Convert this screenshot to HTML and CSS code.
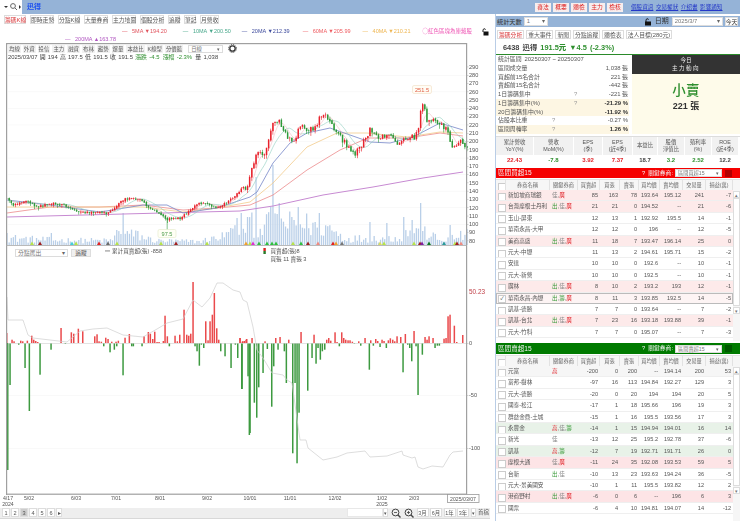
FILE: index.html
```html
<!DOCTYPE html>
<html lang="zh-Hant">
<head>
<meta charset="utf-8">
<title>迅得</title>
<link rel="stylesheet" href="styles.css">
</head>
<body>
<header class="top">
  <div class="searchbox">
    <svg width="22" height="14" viewBox="0 0 22 14"><path d="M4 6h4l-2 2z" fill="#333"/><circle cx="13" cy="6" r="2.4" fill="none" stroke="#666" stroke-width="1"/><path d="M15 8l2 2" stroke="#666"/><path d="M19 5l2 2-2 2z" fill="#333"/></svg>
  </div>
  <div class="stockname">迅得</div>
  <nav class="topbtns"><span>審法</span><span>概要</span><span>體檢</span><span>主力</span><span>檢核</span></nav>
  <nav class="toplinks"><a>個股資訊</a><a>交易權狀</a><a>介紹書</a><a>影響通知</a></nav>
</header>

<main class="main">
  <section class="left">
    <nav class="tabs lefttabs">
      <span class="on w1">籌碼K線</span><span class="w2">即時走勢</span><span class="w1">分點K線</span><span class="w2">大量券商</span><span class="w2">主力地圖</span><span class="w2">個股分析</span><span class="w3">追蹤</span><span class="w3">筆記</span><span class="w4">月營收</span>
    </nav>
    <div class="legend">
      <span class="lg c5">5MA <b>▼</b>194.20</span>
      <span class="lg c10">10MA <b>▼</b>200.50</span>
      <span class="lg c20">20MA <b>▼</b>212.39</span>
      <span class="lg c60">60MA <b>▼</b>205.99</span>
      <span class="lg c40">40MA <b>▼</b>210.21</span>
      <span class="hint">◯紅色區塊為庫藏股</span>
      <svg class="lock" width="8" height="8" viewBox="0 0 8 8"><path d="M2 4V2.2a1.4 1.4 0 0 1 2.6-.7" fill="none" stroke="#111"/><rect x="2.5" y="3.5" width="5" height="4" fill="#111"/></svg>
    </div>
    <div class="legend legend2"><span class="lg c200">200MA <b>▲</b>163.78</span></div>

    <div class="chartarea">
      <div id="chart"></div>
      <div class="toolbar">
        <span>均線</span><span>外資</span><span>投信</span><span>主力</span><span>融資</span><span>布林</span><span>趨勢</span><span>爆量</span><span>本益比</span><span>K線型</span><span>分價籃</span>
        <em class="sel daysel">日線</em>
        <svg class="gear" width="9" height="9" viewBox="0 0 9 9"><circle cx="4.5" cy="4.5" r="2.7" fill="none" stroke="#333" stroke-width="1.3"/><circle cx="4.5" cy="4.5" r="3.9" fill="none" stroke="#333" stroke-width="1" stroke-dasharray="1 1.04"/></svg>
      </div>
      <div class="quote">2025/03/07 開 194 高 197.5 低 191.5 收 191.5 <i class="g">漲跌 -4.5</i> <i class="g">漲幅 -2.3%</i> 量 1,038</div>
      <div class="lowctl"><em class="sel brokersel">分點選出</em><span class="btn">追蹤</span></div>
    </div>

    <footer class="pager">
      <div class="pages"><span>1</span><span>2</span><span class="cur">3</span><span>4</span><span>5</span><span>6</span><span class="more">▸</span></div>
      <div class="ranges">
        <em class="rangeinput"></em><em class="rangearrow">▾</em>
        <svg width="10" height="10" viewBox="0 0 10 10"><circle cx="4.5" cy="4.5" r="3.4" fill="none" stroke="#444"/><path d="M6.8 6.8L9.5 9.5" stroke="#444" stroke-width="1.4"/><path d="M3 4.5h3" stroke="#444" stroke-width=".8"/></svg>
        <svg width="10" height="10" viewBox="0 0 10 10"><circle cx="4.5" cy="4.5" r="3.4" fill="none" stroke="#444"/><path d="M6.8 6.8L9.5 9.5" stroke="#444" stroke-width="1.4"/><path d="M3 4.5h3M4.5 3v3" stroke="#444" stroke-width=".8"/></svg>
        <span>3月</span><span>6月</span><span>1年</span><span>3年</span><em class="rangearrow">▾</em><span class="first">首檔</span>
      </div>
    </footer>
  </section>

  <aside class="right">
    <div class="filter">
      <label>統計天數</label><em class="sel daysfield">1</em>
      <svg class="datelock" width="8" height="8" viewBox="0 0 8 8"><path d="M2 4V2.2a1.4 1.4 0 0 1 2.6-.7" fill="none" stroke="#111"/><rect x="1" y="3.5" width="6" height="4" fill="#111"/></svg>
      <label class="datelabel">日期</label><em class="sel datefield">2025/3/7</em><span class="today">今天</span>
    </div>
    <nav class="tabs righttabs">
      <span class="on">籌碼分析</span><span>重大事件</span><span>新聞</span><span>分點追蹤</span><span>體檢表</span><span>法人目標(280元)</span>
    </nav>
    <div class="headline">6438 迅得 <b class="g">191.5元</b> <b class="g">▼4.5 (-2.3%)</b></div>

    <div class="summary">
      <div class="stats">
        <div class="st"><span>統計區間</span><span class="range">20250307 ~ 20250307</span></div>
        <div class="st"><span>區間成交量</span><b>1,038 張</b></div>
        <div class="st"><span>買超前15名合計</span><b>221 張</b></div>
        <div class="st"><span>賣超前15名合計</span><b>-442 張</b></div>
        <div class="st"><span>1日籌碼集中</span><u class="q1">?</u><b>-221 張</b></div>
        <div class="st y"><span>1日籌碼集中(%)</span><u class="q1">?</u><b class="dk">-21.29 %</b></div>
        <div class="st y"><span>20日籌碼集中(%)</span><b class="dk">-11.92 %</b></div>
        <div class="st"><span>佔股本比重</span><u class="q2">?</u><b>-0.27 %</b></div>
        <div class="st y"><span>區間周轉率</span><u class="q2">?</u><b class="dk">1.26 %</b></div>
      </div>
      <div class="today-box">
        <div class="tb-head"><span>今日</span><span class="spaced">主力動向</span></div>
        <div class="tb-body"><strong>小賣</strong><span>221 張</span></div>
      </div>
    </div>

    <div class="fin">
      <div class="fc"><span>累計營收<br>YoY(%)</span><b class="r">22.43</b></div>
      <div class="fc"><span>營收<br>MoM(%)</span><b class="g">-7.8</b></div>
      <div class="fc"><span>EPS<br>(季)</span><b class="r">3.92</b></div>
      <div class="fc"><span>EPS<br>(近4季)</span><b class="r">7.37</b></div>
      <div class="fc"><span>本益比</span><b>18.7</b></div>
      <div class="fc"><span>股價<br>淨值比</span><b class="g">3.2</b></div>
      <div class="fc"><span>殖利率<br>(%)</span><b class="g">2.52</b></div>
      <div class="fc"><span>ROE<br>(近4季)</span><b>12.2</b></div>
    </div>

    <section class="rank">
      <div class="rankbar red"><h2>區間買超15</h2><u>?</u><span>關鍵券商:</span><em class="sel ranksel">區間買超15</em><i class="sq"></i></div>
      <div class="row head"><span class="cb"></span><span>券商名稱</span><span>關鍵券商</span><span>買賣超</span><span>買張</span><span>賣張</span><span>買均價</span><span>賣均價</span><span>交易量</span><span>損益(萬)</span></div>
      <div class="rankbody">
        <div class="rows">
          <div class="row pk"><span class="cb"></span><span>新加坡商瑞銀</span><span><i>佳</i>,<i class="r">廣</i></span><span>85</span><span>163</span><span>78</span><span>193.64</span><span>195.12</span><span>241</span><span>-7</span></div>
          <div class="row pk"><span class="cb"></span><span>台灣摩根士丹利</span><span><i class="g">出</i>,<i>佳</i>,<i class="r">廣</i></span><span>21</span><span>21</span><span>0</span><span>194.52</span><span>--</span><span>21</span><span>-6</span></div>
          <div class="row"><span class="cb"></span><span>玉山-屏東</span><span></span><span>12</span><span>13</span><span>1</span><span>192.92</span><span>195.5</span><span>14</span><span>-1</span></div>
          <div class="row"><span class="cb"></span><span>華南永昌-大甲</span><span></span><span>12</span><span>12</span><span>0</span><span>196</span><span>--</span><span>12</span><span>-5</span></div>
          <div class="row pk"><span class="cb"></span><span>美商高盛</span><span><i class="g">出</i>,<i>佳</i>,<i class="r">廣</i></span><span>11</span><span>18</span><span>7</span><span>193.47</span><span>196.14</span><span>25</span><span>0</span></div>
          <div class="row"><span class="cb"></span><span>元大-中壢</span><span></span><span>11</span><span>13</span><span>2</span><span>194.61</span><span>195.71</span><span>15</span><span>-2</span></div>
          <div class="row"><span class="cb"></span><span>安達</span><span></span><span>10</span><span>10</span><span>0</span><span>192.6</span><span>--</span><span>10</span><span>-1</span></div>
          <div class="row"><span class="cb"></span><span>元大-新營</span><span></span><span>10</span><span>10</span><span>0</span><span>192.5</span><span>--</span><span>10</span><span>-1</span></div>
          <div class="row pk"><span class="cb"></span><span>廣林</span><span><i class="g">出</i>,<i>佳</i>,<i class="r">廣</i></span><span>8</span><span>10</span><span>2</span><span>193.2</span><span>193</span><span>12</span><span>-1</span></div>
          <div class="row sel-row"><span class="cb ck"></span><span>華南永昌-內壢</span><span><i class="g">出</i>,<i class="g">籌</i>,<i class="r">廣</i></span><span>8</span><span>11</span><span>3</span><span>193.85</span><span>192.5</span><span>14</span><span>-5</span></div>
          <div class="row"><span class="cb"></span><span>凱基-德勝</span><span></span><span>7</span><span>7</span><span>0</span><span>193.64</span><span>--</span><span>7</span><span>-2</span></div>
          <div class="row pk"><span class="cb"></span><span>凱基-台北</span><span><i class="g">出</i>,<i>佳</i>,<i class="r">廣</i></span><span>7</span><span>23</span><span>16</span><span>193.18</span><span>193.88</span><span>39</span><span>-1</span></div>
          <div class="row"><span class="cb"></span><span>元大-竹科</span><span></span><span>7</span><span>7</span><span>0</span><span>195.07</span><span>--</span><span>7</span><span>-3</span></div>
        </div>
        <div class="scroll"><i class="up">▴</i><i class="thumb t1"></i><i class="down">▾</i></div>
      </div>
    </section>

    <section class="rank rank2">
      <div class="rankbar green"><h2>區間賣超15</h2><u>?</u><span>關鍵券商:</span><em class="sel ranksel">區間賣超15</em><i class="sq"></i></div>
      <div class="row head"><span class="cb"></span><span>券商名稱</span><span>關鍵券商</span><span>買賣超</span><span>買張</span><span>賣張</span><span>買均價</span><span>賣均價</span><span>交易量</span><span>損益(萬)</span></div>
      <div class="rankbody">
        <div class="rows">
          <div class="row gy"><span class="cb"></span><span>元富</span><span><i class="r">高</i></span><span>-200</span><span>0</span><span>200</span><span>--</span><span>194.14</span><span>200</span><span>53</span></div>
          <div class="row"><span class="cb"></span><span>富邦-樹林</span><span></span><span>-97</span><span>16</span><span>113</span><span>194.84</span><span>192.27</span><span>129</span><span>3</span></div>
          <div class="row"><span class="cb"></span><span>元大-德勝</span><span></span><span>-20</span><span>0</span><span>20</span><span>194</span><span>194</span><span>20</span><span>5</span></div>
          <div class="row"><span class="cb"></span><span>國泰-松江</span><span></span><span>-17</span><span>1</span><span>18</span><span>195.66</span><span>196</span><span>19</span><span>3</span></div>
          <div class="row"><span class="cb"></span><span>群益金鼎-土城</span><span></span><span>-15</span><span>1</span><span>16</span><span>195.5</span><span>193.56</span><span>17</span><span>3</span></div>
          <div class="row gn"><span class="cb"></span><span>永豐金</span><span><i class="r">高</i>,<i>佳</i>,<i class="g">籌</i></span><span>-14</span><span>1</span><span>15</span><span>194.94</span><span>194.01</span><span>16</span><span>14</span></div>
          <div class="row"><span class="cb"></span><span>新光</span><span><i>佳</i></span><span>-13</span><span>12</span><span>25</span><span>195.2</span><span>192.78</span><span>37</span><span>-6</span></div>
          <div class="row gn"><span class="cb"></span><span>凱基</span><span><i class="r">高</i>,<i class="g">籌</i></span><span>-12</span><span>7</span><span>19</span><span>192.71</span><span>191.71</span><span>26</span><span>0</span></div>
          <div class="row pk2"><span class="cb"></span><span>摩根大通</span><span><i>佳</i>,<i class="r">廣</i></span><span>-11</span><span>24</span><span>35</span><span>192.08</span><span>193.53</span><span>59</span><span>5</span></div>
          <div class="row"><span class="cb"></span><span>台新</span><span><i class="g">出</i>,<i>佳</i></span><span>-10</span><span>13</span><span>23</span><span>193.63</span><span>194.24</span><span>36</span><span>-5</span></div>
          <div class="row"><span class="cb"></span><span>元大-景美國安</span><span></span><span>-10</span><span>1</span><span>11</span><span>195.5</span><span>193.82</span><span>12</span><span>2</span></div>
          <div class="row pk2"><span class="cb"></span><span>港商野村</span><span><i class="g">出</i>,<i>佳</i>,<i class="r">廣</i></span><span>-6</span><span>0</span><span>6</span><span>--</span><span>196</span><span>6</span><span>3</span></div>
          <div class="row"><span class="cb"></span><span>國票</span><span></span><span>-6</span><span>4</span><span>10</span><span>194.81</span><span>194.07</span><span>14</span><span>-12</span></div>
        </div>
        <div class="scroll"><i class="up">▴</i><i class="thumb t2"></i><i class="down">▾</i></div>
      </div>
    </section>
  </aside>
</main>
<script src="script.js"></script>
</body>
</html>
```
FILE: styles.css
```css
* { box-sizing: border-box; }
html, body { margin: 0; padding: 0; }
body {
  width: 740px; height: 521px; overflow: hidden; background: #fff; color: #555;
  font: 5.8px/1.2 "Liberation Sans", "Noto Sans CJK TC", sans-serif;
  filter: blur(.35px);
}
i, em, u { font-style: normal; text-decoration: none; }
.g { color: #2f8f2f; }
.r { color: #e0252b; }

.top { height: 14px; background: #95b3d7; display: flex; align-items: center; }
.searchbox { width: 22px; height: 14px; background: #fff; }
.stockname { margin-left: 5px; color: #1c4ff0; font-size: 7px; font-weight: 700; }
.topbtns { margin-left: 494px; display: flex; gap: 2px; }
.topbtns span { width: 16px; height: 9px; line-height: 9px; text-align: center; background: #f7eeee; color: #d22; }
.toplinks { margin-left: 8px; display: flex; gap: 2.5px; font-size: 5.6px; }
.toplinks a { color: #2438c8; text-decoration: underline; white-space: nowrap; }

.main { display: flex; height: 507px; }
.left { width: 490px; flex: none; display: flex; flex-direction: column; }
.right { width: 245px; margin-left: 5px; flex: none; border-left: 1px solid #b9cde6; height: 507px; overflow: hidden; padding-top: 2px; }

.tabs { display: flex; }
.tabs span { height: 9px; line-height: 8.5px; text-align: center; border: 1px solid #dcdcdc; background: #fff; white-space: nowrap; }
.tabs .on { color: #d8383a; }
.lefttabs { height: 11px; padding: 1px 0 0 4px; gap: 2px; }
.lefttabs .w1 { width: 22px; }
.lefttabs .w2 { width: 24px; }
.lefttabs .w3 { width: 12px; }
.lefttabs .w4 { width: 19px; }
.lefttabs span { margin-right: 2px; }

.legend { display: flex; height: 9px; align-items: center; padding-left: 122px; margin-top: 2px; font-size: 5.5px; white-space: nowrap; }
.legend2 { padding-left: 65px; margin-top: 0; height: 7px; }
.lg { margin-right: 16px; }
.lg::before { content: "— "; margin-right: 3px; }
.c5 { color: #e0525c; }
.c10 { color: #47a78a; margin-right: 11px; }
.c20 { color: #3d4a9c; margin-right: 13px; }
.c60 { color: #ee5a5f; margin-right: 12px; }
.c40 { color: #eeb550; margin-right: 0; }
.c200 { color: #b055c0; }
.hint { color: #ee55b4; margin-left: auto; }
.lock { margin: 0 1px 0 9px; }

.chartarea { position: relative; height: 465px; }
#chart svg { display: block; }
.toolbar { position: absolute; left: 8px; top: 1px; display: flex; align-items: center; height: 9px; gap: 2px; font-size: 5.4px; }
.toolbar span { height: 8px; line-height: 8px; padding: 0 1px; text-align: center; background: #f2f2f2; min-width: 12px; border: 0; white-space: nowrap; }
.sel { display: block; background: #fff; border: 1px solid #dcdcdc; color: #777; position: relative; white-space: nowrap; padding-left: 2px; }
.sel::after { content: "▾"; position: absolute; right: 2px; top: 0; color: #666; }
.daysel { width: 35px; height: 8px; line-height: 6.5px; margin-left: 3px; }
.gear { margin-left: 3px; }
.quote { position: absolute; left: 8px; top: 11px; font-size: 5.9px; color: #444; white-space: nowrap; word-spacing: .6px; }
.quote i { margin-right: 1px; }
.lowctl { position: absolute; left: 15px; top: 206px; display: flex; gap: 3px; }
.brokersel { width: 53px; height: 8px; line-height: 6.5px; }
.btn { width: 20px; height: 8px; line-height: 7px; text-align: center; background: #f0f0f0; border: 1px solid #ddd; }

.pager { height: 11px; background: #eee; border-bottom: 1px solid #d8d8d8; display: flex; justify-content: space-between; }
.pages { display: flex; gap: 1px; padding-left: 2px; }
.pages span { width: 8px; height: 8.6px; line-height: 8px; text-align: center; background: #fff; border: 1px solid #ddd; font-size: 5.6px; }
.pages .cur { background: #ccc; }
.pages .more { width: 6px; }
.ranges { display: flex; align-items: flex-start; gap: 1.5px; font-size: 5.4px; }
.ranges svg { margin: 0 1px; }
.ranges span { width: 12px; height: 8.6px; line-height: 8px; text-align: center; background: #fff; border: 1px solid #ddd; }
.rangeinput { width: 36px; height: 8.6px; background: #fff; margin-right: -1.5px; border: 1px solid #e8e8e8; }
.rangearrow { width: 5px; height: 8.6px; text-align: center; line-height: 8px; background: #fff; border: 1px solid #ddd; }
.ranges .first { border: 0; background: none; width: 13px; }

.filter { height: 11px; background: #95b3d7; display: flex; align-items: center; padding-left: 1px; color: #333; white-space: nowrap; }
.filter > * { flex: none; }
.filter label { font-size: 6.2px; }
.daysfield { width: 24px; height: 9px; line-height: 7px; margin-left: 2px; }
.datelock { margin-left: 96px; }
.filter .datelabel { font-size: 7px; margin-left: 3px; }
.datefield { width: 51px; height: 9px; line-height: 7px; margin-left: 3px; }
.today { width: 13px; height: 9px; line-height: 8px; margin-left: 2px; text-align: center; background: #fff; border: 1px solid #ddd; }

.righttabs { margin-top: 3px; height: 9px; padding-left: 1px; }
.righttabs span { padding: 0 1px; margin-right: 2px; min-width: 25px; }
.righttabs span:nth-child(3) { min-width: 14px; }
.righttabs span:nth-child(5) { min-width: 21px; }
.righttabs span:nth-child(6) { min-width: 43px; }
.headline { margin-top: 2px; height: 14px; line-height: 13px; padding-left: 7px; font-size: 7.4px; font-weight: 700; border-bottom: 1px solid #2a8a2a; color: #444; word-spacing: 1px; white-space: nowrap; }

.summary { display: flex; height: 79px; }
.stats { width: 133px; flex: none; }
.st { height: 8.78px; line-height: 8.78px; display: flex; padding: 0 1px 0 2px; position: relative; font-size: 5.9px; }
.st b { margin-left: auto; font-weight: 400; }
.st .dk { color: #333; font-weight: 700; }
.st.y { background: #fdf6e3; }
.st .range { margin-left: 3px; }
.st u { position: absolute; top: 0; color: #999; }
.q1 { left: 78px; } .q2 { left: 56px; }
.today-box { flex: 1; margin-left: 3px; background: #fefbea; display: flex; flex-direction: column; }
.tb-head { height: 19px; background: #333; color: #eee; display: flex; flex-direction: column; align-items: center; justify-content: center; font-size: 5.6px; gap: 1px; }
.spaced { letter-spacing: 1.4px; }
.tb-body { display: flex; flex-direction: column; align-items: center; padding-top: 9px; font-weight: 700; }
.tb-body strong { font-size: 13.5px; line-height: 16px; color: #2f8f2f; letter-spacing: .3px; font-weight: 500; }
.tb-body span { font-size: 9px; color: #333; margin-top: 1px; line-height: 12px; }

.fin { margin-top: 2px; height: 29px; display: grid; grid-template-columns: 38px 40px 29px 30px 25px 27px 27px 27px; border-top: 1px solid #ddd; }
.fc { display: flex; flex-direction: column; border-right: 1px solid #fff; }
.fc span { height: 18px; background: #f1f1f1; display: flex; align-items: center; justify-content: center; text-align: center; font-size: 5.4px; line-height: 7.2px; }
.fc b { height: 10px; line-height: 10px; text-align: center; font-size: 6px; color: #444; }
.fc b.r { color: #e0252b; } .fc b.g { color: #2f8f2f; }

.rank { margin-top: 3px; }
.rank2 { margin-top: 2px; }
.rankbar { height: 10px; display: flex; align-items: center; color: #f4f4f4; padding-left: 2px; }
.rank2 .rankbar { height: 11px; }
.rankbar.red { background: #f50000; }
.rankbar.green { background: #007a00; }
.rankbar h2 { margin: 0; font-size: 6.6px; font-weight: 400; flex: 1; }
.rankbar u { margin-right: 3px; }
.rankbar > span { margin-right: 2px; }
.ranksel { width: 47px; height: 8px; line-height: 6.5px; font-size: 5.2px; }
.sq { width: 7px; height: 7px; margin: 0 8px 0 3px; background: rgba(0,0,0,.28); }

.row { display: grid; grid-template-columns: 10px 44px 28px 22px 20px 19px 21px 23px 23px 27px; width: 237px; height: 11.42px; line-height: 11px; border-bottom: 1px solid #efefef; font-size: 5.6px; white-space: nowrap; overflow: hidden; }
.row > span { text-align: right; padding-right: 2px; overflow: hidden; }
.row > span:nth-child(2), .row > span:nth-child(3) { text-align: left; padding: 0 0 0 2px; }
.row.head { height: 11px; margin-top: 1px; background: #f6f6f6; border: 0; border-top: 1px solid #e2e2e2; width: 244px; grid-template-columns: 10px 44px 28px 22px 20px 19px 21px 23px 23px 27px 7px; }
.row.head > span { text-align: center; padding: 0; border-right: 1px solid #e2e2e2; color: #666; font-size: 5.2px; line-height: 10px; }
.row .cb { padding: 0; position: relative; }
.row .cb::after { content: ""; position: absolute; left: 2px; top: 2.5px; width: 6px; height: 6px; background: #fff; border: 1px solid #ccc; }
.row .ck::after { content: "✓"; font-size: 5px; line-height: 4px; color: #333; text-align: center; }
.row i { color: #888; }
.row i.r { color: #e0252b; } .row i.g { color: #3d9c3d; }
.pk { background: #fdeaea; }
.pk2 { background: #fde4e6; }
.gn { background: #e8f2e8; }
.gy { background: #f6f6f6; }
.sel-row { background: #fdf4f4; outline: 1px solid #bbb; outline-offset: -1px; }

.rankbody { display: flex; height: 151px; overflow: hidden; }
.rank2 .rankbody { height: 155px; }
.rows { width: 237px; flex: none; }
.scroll { width: 7px; display: flex; flex-direction: column; background: #f6f6f6; color: #777; font-size: 5px; text-align: center; }
.scroll .up, .scroll .down { height: 7px; line-height: 6px; background: #fff; border: 1px solid #ddd; margin-top: 1px; flex: none; }
.scroll .thumb { background: #fff; border: 1px solid #ddd; flex: none; }
.scroll .t1 { height: 108px; }
.scroll .t2 { height: 112px; }
```
FILE: script.js
```js
(function () {
  var N = 218, X0 = 7, STEP = 2.11;
  var seed = 12345;
  function rnd() {
    seed = (seed * 1664525 + 1013904223) >>> 0;
    return seed / 4294967296;
  }
  function interp(p, x) {
    if (x <= p[0][0]) return p[0][1];
    for (var i = 1; i < p.length; i++) {
      if (x <= p[i][0]) {
        var t = (x - p[i - 1][0]) / (p[i][0] - p[i - 1][0]);
        return p[i - 1][1] + t * (p[i][1] - p[i - 1][1]);
      }
    }
    return p[p.length - 1][1];
  }
  function line(p, color, w) {
    var d = p.map(function (q, i) { return (i ? 'L' : 'M') + q[0].toFixed(1) + ' ' + q[1].toFixed(1); }).join('');
    return '<path d="' + d + '" fill="none" stroke="' + color + '" stroke-width="' + w + '" stroke-linejoin="round"/>';
  }
  function rect(x, y, w, h, c) {
    return '<rect x="' + x.toFixed(1) + '" y="' + y.toFixed(1) + '" width="' + w + '" height="' + Math.max(h, 0.4).toFixed(1) + '" fill="' + c + '"/>';
  }
  function text(x, y, s, cls) {
    return '<text x="' + x + '" y="' + y + '" class="' + cls + '">' + s + '</text>';
  }

  var closePts = [[7,198],[13,205],[27,200],[37,207],[52,203],[63,205],[80,212],[108,213],[125,198],[142,200],[148,207],[157,212],[167,219],[180,218],[187,213],[198,203],[207,203],[217,208],[233,198],[243,187],[247,187],[250,173],[257,152],[265,153],[273,122],[278,120],[287,137],[295,142],[300,125],[308,130],[315,128],[322,113],[327,117],[337,133],[347,145],[355,153],[362,145],[370,130],[380,138],[388,133],[398,145],[407,137],[415,137],[419,125],[422,100],[427,120],[437,122],[447,128],[453,150],[460,140],[464,147]];
  var ma20 = [[7,200],[50,205],[100,212],[143,205],[167,205],[183,213],[217,208],[250,197],[257,192],[273,163],[290,143],[307,133],[330,128],[350,135],[370,142],[390,143],[413,137],[440,123],[463,130]];
  var ma40 = [[7,207],[100,207],[143,207],[183,212],[217,208],[250,202],[273,183],[307,147],[337,133],[367,133],[407,137],[440,132],[463,133]];
  var ma60 = [[7,213],[50,207],[100,207],[143,205],[183,210],[217,208],[250,205],[273,195],[307,170],[340,150],[368,138],[407,138],[440,133],[463,136]];
  var ma200 = [[7,217],[240,211],[273,206],[323,195],[373,187],[423,178],[463,172]];
  var volEnv = [[6,10],[50,7],[110,6],[122,18],[140,12],[155,6],[200,5],[228,14],[245,28],[300,30],[330,24],[345,9],[400,10],[410,20],[430,15],[440,6],[465,14]];
  var volPeak = { 123:32, 117:15, 138:14, 230:17, 238:27, 242:32, 248:28, 8:12, 52:12, 257:68, 273:80, 270:38, 280:42, 298:38, 320:32, 420:42, 403:28, 412:25, 370:23, 387:22, 450:20 };

  var s = '';
  // grid
  for (var v = 100; v <= 280; v += 20) {
    var gy = 240.6 - (v - 80) * 0.828;
    s += rect(8, gy, 458, 0.5, '#f3f3f3');
  }
  s += rect(8, 395, 458, 0.5, '#f3f3f3') + rect(8, 448, 458, 0.5, '#f3f3f3');

  // volume
  for (var i = 0; i <= N; i++) {
    var x = X0 + i * STEP;
    var h = interp(volEnv, x) * (0.25 + rnd() * 0.9);
    for (var k in volPeak) { if (Math.abs(k - x) < STEP / 2) h = volPeak[k]; }
    s += rect(x - 0.6, 245 - h, 1.3, h, '#b9cfe8');
  }

  // price series
  var close = [];
  for (i = 0; i <= N; i++) {
    x = X0 + i * STEP;
    var amp = x < 245 ? 1.8 : 5;
    close.push(interp(closePts, x) + (rnd() - 0.5) * amp);
  }
  function sma(n) {
    var out = [];
    for (var a = 0; a <= N; a++) {
      var sum = 0, c = 0;
      for (var b = Math.max(0, a - n + 1); b <= a; b++) { sum += close[b]; c++; }
      out.push([X0 + a * STEP, sum / c]);
    }
    return out;
  }
  // MA lines
  s += line(ma200, '#c78ad2', 1);
  s += line(ma60, '#ec8a8c', 0.8);
  s += line(ma40, '#f2cc8c', 0.8);
  s += line(ma20, '#7585c8', 0.8);
  s += line(sma(10), '#8fcfc0', 0.6);
  s += line(sma(5), '#f0b0b8', 0.5);

  // candles
  for (i = 1; i <= N; i++) {
    x = X0 + i * STEP;
    var o = close[i - 1] + (rnd() - 0.5) * 1.2, c = close[i];
    var up = c < o, col = up ? '#e8222c' : '#2e9a3a';
    var w = x < 245 ? 1.5 : 2.2;
    s += rect(x - 0.25, Math.min(o, c) - rnd() * w, 0.6, Math.abs(o - c) + rnd() * w * 2 + 1, col);
    s += rect(x - 0.7, Math.min(o, c), 1.5, Math.abs(o - c) + 0.5, col);
  }

  // peak labels
  s += '<rect x="412.5" y="85.5" width="19" height="8" rx="1.5" fill="#fffdf5" stroke="#f3e3cc" stroke-width=".7"/>' + text(422, 91.6, '251.5', 'peak pr');
  s += rect(166.8, 218, 0.6, 12, '#2e9a3a');
  s += '<rect x="158" y="229.5" width="18" height="8" rx="1.5" fill="#fffff5" stroke="#e6ecd0" stroke-width=".7"/>' + text(167, 235.6, '97.5', 'peak pg');

  // signal triangles
  var tri = [[32,'#b7e34a'],[40,'#a02020'],[72,'#44cfd8'],[76,'#b7e34a'],[99,'#e42020'],[108,'#6a6a6a'],[117,'#b7e34a'],[161,'#b7e34a'],[176,'#a02020'],[207,'#b7e34a'],[246,'#f0a030'],[250,'#b7e34a'],[253,'#e030d0'],[259,'#30c040'],[267,'#30c040'],[272,'#30c040'],[276,'#30c040'],[293,'#b7e34a'],[301,'#30c040'],[308,'#a02020'],[318,'#f08a80'],[333,'#e42020'],[336,'#f0a030'],[342,'#777'],[380,'#d8dc60'],[384,'#b7e34a'],[414,'#b7e34a'],[420,'#a02020'],[422,'#8020a0'],[429,'#0a7a20'],[444,'#2a9a9a'],[455,'#b7e34a'],[457,'#a02020'],[461,'#f08a80']];
  tri.forEach(function (t) {
    s += '<path d="M' + (t[0] - 2) + ' 245L' + t[0] + ' 241.5L' + (t[0] + 2) + ' 245z" fill="' + t[1] + '"/>';
  });

  // lower pane: bars, zoom coordinates converted to page pixels
  var red = [[20,30],[36,10],[42,5],[62,7],[68,5],[82,7],[95,22],[101,10],[107,6],[113,3],[183,45],[214,32],[221,28],[235,43],[248,35],[284,20],[291,26],[297,5],[304,4],[317,16],[324,12],[335,4],[348,4],[355,7],[375,16],[388,27],[432,20],[445,33],[451,28],[458,12],[464,34],[471,3],[477,3],[490,6],[495,82],[502,20],[525,22],[532,5],[539,25],[552,100],[560,25],[566,22],[572,28],[579,183],[617,65],[624,8],[630,65],[637,85],[643,150],[650,44],[656,10],[720,15],[727,4],[733,6],[740,12]];
  var redB = [[0,15],[8,5],[18,10],[36,15],[75,5],[107,15],[120,18],[146,10],[183,33],[222,25],[260,10],[266,15],[272,7],[285,32],[291,3],[305,32],[311,15],[317,10],[324,8],[330,8],[337,4],[356,5],[375,15],[392,8],[407,12],[413,6],[426,10],[432,6],[445,8],[451,14],[458,10],[464,5],[471,20],[482,18],[496,27],[522,36],[555,18],[561,10],[567,20],[579,15],[612,13],[618,15],[624,80],[630,85],[643,52],[650,3],[668,24]];
  var grn = [[23,381],[30,126],[56,5],[75,75],[88,204],[120,95],[153,20],[196,3],[311,10],[330,28],[343,20],[350,10],[369,97],[395,10],[400,10],[426,10],[508,10],[585,10],[591,25],[598,68],[604,5],[611,15],[662,25],[675,40],[693,75],[706,5],[713,45],[726,138],[748,276]];
  var grnB = [[5,138],[24,100],[30,270],[43,179],[50,224],[56,133],[69,90],[82,18],[95,191],[101,70],[114,20],[133,25],[139,120],[158,331],[165,120],[171,361],[177,209],[203,143],[216,45],[228,62],[234,15],[241,50],[247,25],[254,20],[298,10],[343,2],[362,8],[388,80],[400,8],[420,12],[439,15],[489,88],[503,5],[509,15],[515,55],[528,10],[534,156],[547,35],[585,15],[592,8],[598,8]];
  var REDC = '#ea4a4c', GRNC = '#3d9a40';
  red.forEach(function (b) { s += rect(b[0] / 3 - 0.7, 343 - b[1] / 3, 1.5, b[1] / 3, REDC); });
  redB.forEach(function (b) { s += rect(240 + b[0] / 3 - 0.7, 343 - b[1] / 3, 1.5, b[1] / 3, REDC); });
  grn.forEach(function (b) { s += rect(b[0] / 3 - 0.7, 343, 1.5, b[1] / 3, GRNC); });
  grnB.forEach(function (b) { s += rect(240 + b[0] / 3 - 0.7, 343, 1.5, b[1] / 3, GRNC); });
  s += rect(8, 343, 458, 0.6, '#d0d0d0');

  // cumulative line
  var cum = [[7,297],[8,320],[23,320],[28,335],[33,338],[50,340],[67,342],[80,331],[93,329],[107,328],[123,335],[143,337],[157,329],[167,323],[183,319],[193,300],[202,307],[210,298],[217,283],[223,283],[233,290],[240,292],[243,300],[247,302],[253,327],[257,350],[263,358],[272,373],[283,375],[287,380],[292,383],[300,440],[306,440],[308,448],[323,460],[337,457],[347,453],[365,451],[370,457],[387,456],[402,451],[403,455],[412,458],[415,457],[418,467],[423,469],[432,466],[443,467],[450,455],[453,452],[463,451]];
  s += line(cum, '#cfcfcf', 0.7);

  // frame
  s += rect(6, 43, 461, 1.2, '#a0a0a0') + rect(6, 43, 1.2, 452, '#a0a0a0') + rect(466, 43, 1.2, 452, '#a0a0a0') + rect(6, 493.6, 461, 1.2, '#a0a0a0') + rect(6, 245.2, 461, 0.8, '#a8a8a8');

  // axis labels
  for (v = 80; v <= 290; v += 10) {
    var ay = 240.6 - (v - 80) * 0.828;
    s += rect(466.5, ay, 2, 0.5, '#aaa') + text(469, (ay + 2).toFixed(1), v, 'ax');
  }
  s += rect(466.5, 343, 2, 0.5, '#aaa') + text(469, 345, '0', 'ax');
  s += rect(466.5, 395, 2, 0.5, '#aaa') + text(469, 397, '-50', 'ax');
  s += rect(466.5, 448, 2, 0.5, '#aaa') + text(469, 450, '-100', 'ax');
  s += text(469, 294, '50.23', 'axr');

  [[8,'4/17'],[29,'5/02'],[76,'6/03'],[116,'7/01'],[160,'8/01'],[207,'9/02'],[250,'10/01'],[290,'11/01'],[335,'12/02'],[382,'1/02'],[414,'2/03']].forEach(function (d) {
    s += text(d[0], 499.5, d[1], 'xl');
  });
  s += text(8, 505.5, '2024', 'xl') + text(382, 505.5, '2025', 'xl');
  s += '<rect x="447.5" y="494.5" width="31.5" height="8" fill="#fff" stroke="#999" stroke-width=".8"/>' + text(463, 500.6, '2025/03/07', 'xl');

  // lower legends
  s += rect(105, 250.6, 5, 0.7, '#555') + text(112, 253, '累計買賣超(張) -858', 'lt');
  s += rect(263.4, 248, 2.4, 3, '#d22') + rect(263.4, 251, 2.4, 3, '#2a7a2a');
  s += text(270.5, 253, '買賣超(張)8', 'lt') + text(270.5, 260.6, '買張 11 賣張 3', 'lt');

  document.getElementById('chart').innerHTML =
    '<svg width="490" height="465" viewBox="0 43 490 465" xmlns="http://www.w3.org/2000/svg">' +
    '<style>text{font-family:"Liberation Sans","Noto Sans CJK TC",sans-serif;fill:#555}' +
    '.ax{font-size:5.6px}.axr{font-size:6.4px;fill:#c04048}.xl{font-size:5.2px;text-anchor:middle}' +
    '.lt{font-size:5.6px}.peak{font-size:5.6px;text-anchor:middle}.pr{fill:#e05a40}.pg{fill:#4a9a4a}</style>' +
    s + '</svg>';
})();
```
